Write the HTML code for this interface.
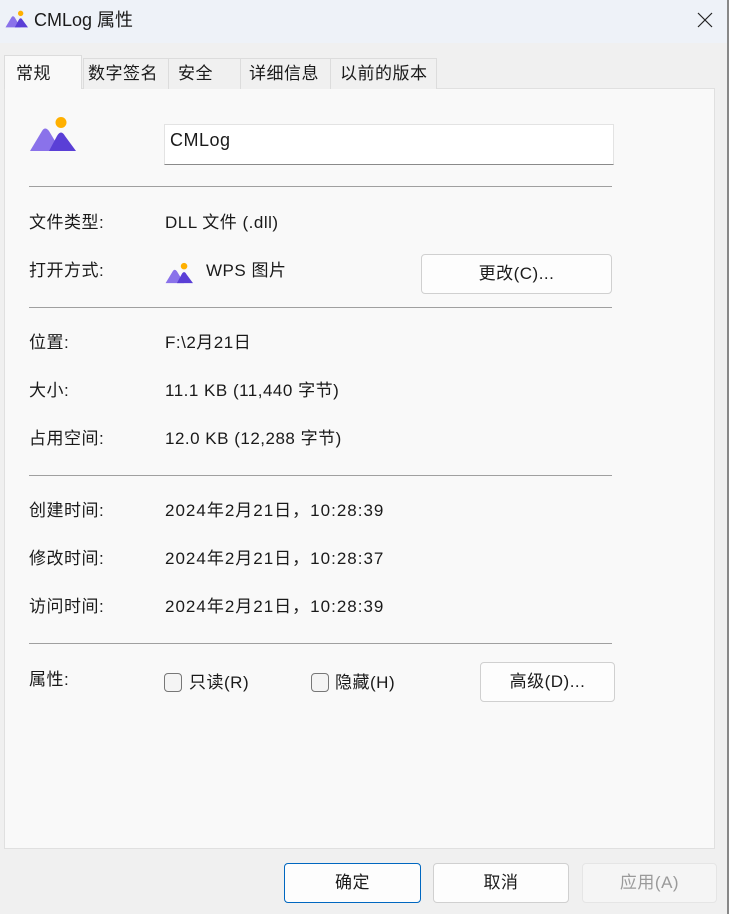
<!DOCTYPE html>
<html><head><meta charset="utf-8"><style>
*{margin:0;padding:0;box-sizing:border-box}
body{width:729px;height:914px;background:#f0f0f0;font-family:"Liberation Sans","Noto Sans CJK SC",sans-serif;font-size:17px;letter-spacing:0.5px;color:#1a1a1a;position:relative;overflow:hidden}
.a{position:absolute;white-space:nowrap;line-height:20px}
.title{position:absolute;left:0;top:0;width:729px;height:43px;background:#eef2f8}
.panel{position:absolute;left:4px;top:88px;width:711px;height:761px;background:#f9f9f9;border:1px solid #e0e0e0}
.tab{position:absolute;top:58px;height:31px;background:#f0f0f0;border:1px solid #dcdcdc;border-bottom:none;font-size:17px;padding:5px 0 0 4px;line-height:20px}
.sep{position:absolute;left:29px;width:583px;height:1px;background:#a0a0a0}
.btn{position:absolute;background:#fdfdfd;border:1px solid #d0d0d0;border-radius:4px;text-align:center;font-size:17px;line-height:20px}
.cb{position:absolute;width:18px;height:19px;border:1px solid #777;border-radius:4px;background:#f4f4f4}
</style></head><body>
<div class="title"></div>
<svg class="a" style="left:5px;top:10px" width="23" height="18" viewBox="0 0 47 36"><circle cx="32" cy="6.5" r="5.5" fill="#ffb000"/><path d="M1 35 L13 15 Q16 10 20 15 L32 35 Z" fill="#8a72ea"/><path d="M20 35 L28 20 Q32 13 36 20 L47 35 Z" fill="#5a3fd6"/></svg>
<div class="a" style="left:34px;top:10px;font-size:18px;letter-spacing:0">CMLog 属性</div>
<svg class="a" style="left:697px;top:12px" width="16" height="16" viewBox="0 0 16 16"><path d="M1 1L15 15M15 1L1 15" stroke="#222" stroke-width="1.2"/></svg>
<div class="panel"></div>
<div class="tab" style="left:83px;width:86px">数字签名</div>
<div class="tab" style="left:168px;width:73px;padding-left:9px">安全</div>
<div class="tab" style="left:240px;width:91px;padding-left:8px">详细信息</div>
<div class="tab" style="left:330px;width:107px;padding-left:9px">以前的版本</div>
<div class="tab" style="left:4px;top:55px;width:78px;height:34px;background:#f9f9f9;padding-top:8px;padding-left:11px">常规</div>
<svg class="a" style="left:29px;top:116px" width="47" height="36" viewBox="0 0 47 36"><circle cx="32" cy="6.5" r="5.5" fill="#ffb000"/><path d="M1 35 L13 15 Q16 10 20 15 L32 35 Z" fill="#8a72ea"/><path d="M20 35 L28 20 Q32 13 36 20 L47 35 Z" fill="#5a3fd6"/></svg>
<div class="a" style="left:164px;top:124px;width:450px;height:41px;background:#fff;border:1px solid #e3e3e3;border-bottom:1px solid #8a8a8a;padding:5px 0 0 5px;font-size:18px">CMLog</div>
<div class="sep" style="top:186px"></div>
<div class="a" style="left:29px;top:213px">文件类型:</div><div class="a" style="left:165px;top:213px">DLL 文件 (.dll)</div>
<div class="a" style="left:29px;top:261px">打开方式:</div>
<svg class="a" style="left:165px;top:262px" width="28" height="22" viewBox="0 0 47 36"><circle cx="32" cy="6.5" r="5.5" fill="#ffb000"/><path d="M1 35 L13 15 Q16 10 20 15 L32 35 Z" fill="#8a72ea"/><path d="M20 35 L28 20 Q32 13 36 20 L47 35 Z" fill="#5a3fd6"/></svg>
<div class="a" style="left:206px;top:261px">WPS 图片</div>
<div class="btn" style="left:421px;top:254px;width:191px;height:40px;padding-top:9px">更改(C)...</div>
<div class="sep" style="top:307px"></div>
<div class="a" style="left:29px;top:333px">位置:</div><div class="a" style="left:165px;top:333px">F:\2月21日</div>
<div class="a" style="left:29px;top:381px">大小:</div><div class="a" style="left:165px;top:381px">11.1 KB (11,440 字节)</div>
<div class="a" style="left:29px;top:429px">占用空间:</div><div class="a" style="left:165px;top:429px">12.0 KB (12,288 字节)</div>
<div class="sep" style="top:475px"></div>
<div class="a" style="left:29px;top:501px">创建时间:</div><div class="a" style="left:165px;top:501px;letter-spacing:1px">2024年2月21日，10:28:39</div>
<div class="a" style="left:29px;top:549px">修改时间:</div><div class="a" style="left:165px;top:549px;letter-spacing:1px">2024年2月21日，10:28:37</div>
<div class="a" style="left:29px;top:597px">访问时间:</div><div class="a" style="left:165px;top:597px;letter-spacing:1px">2024年2月21日，10:28:39</div>
<div class="sep" style="top:643px"></div>
<div class="a" style="left:29px;top:670px">属性:</div>
<div class="cb" style="left:164px;top:673px"></div><div class="a" style="left:189px;top:673px">只读(R)</div>
<div class="cb" style="left:311px;top:673px"></div><div class="a" style="left:335px;top:673px">隐藏(H)</div>
<div class="btn" style="left:480px;top:662px;width:135px;height:40px;padding-top:9px">高级(D)...</div>
<div class="btn" style="left:284px;top:863px;width:137px;height:40px;padding-top:9px;border:1px solid #0067c0">确定</div>
<div class="btn" style="left:433px;top:863px;width:136px;height:40px;padding-top:9px">取消</div>
<div class="btn" style="left:582px;top:863px;width:135px;height:40px;padding-top:9px;background:#f5f5f5;border-color:#e5e5e5;color:#9a9a9a">应用(A)</div>
<div class="a" style="left:727px;top:0;width:2px;height:914px;background:#888"></div>
</body></html>
